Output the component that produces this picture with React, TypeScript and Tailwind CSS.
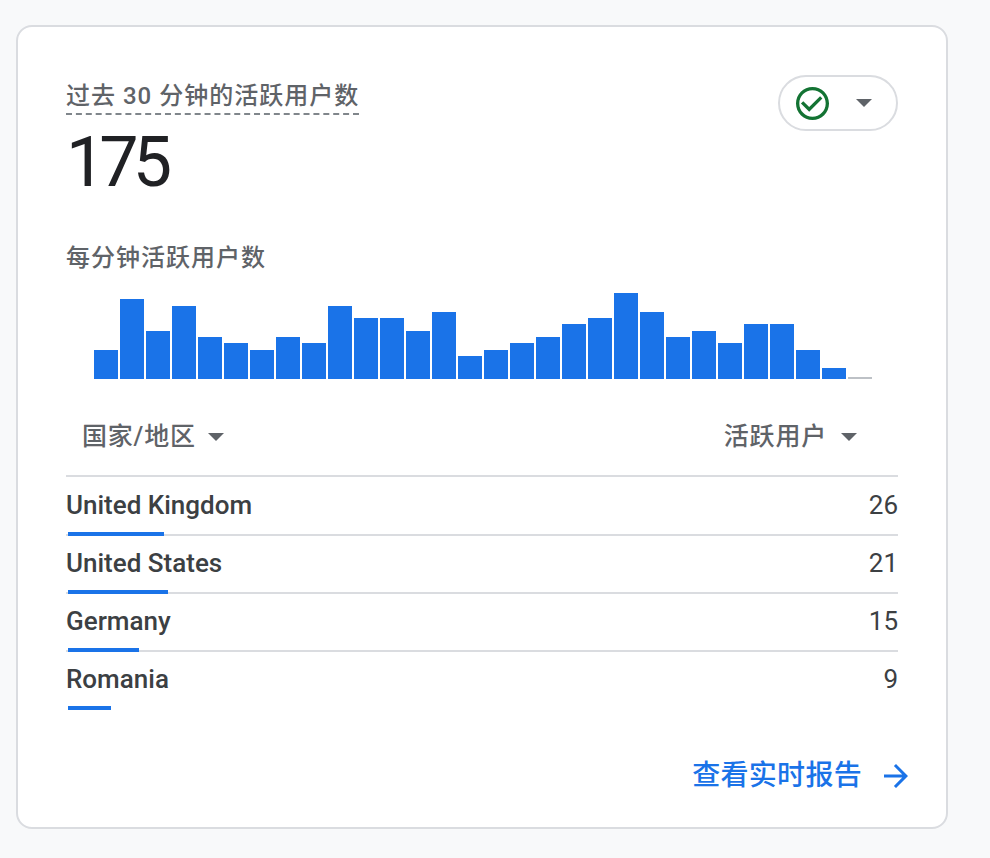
import React from 'react';

const FONT = "font-['Roboto','Noto_Sans_CJK_SC',sans-serif]";

const bars = [29, 80, 48, 73, 42, 36, 29, 42, 36, 73, 61, 61, 48, 67, 23, 29, 36, 42, 55, 61, 86, 67, 42, 48, 36, 55, 55, 29, 11];

const rows = [
    { name: 'United Kingdom', value: 26, width: 96 },
    { name: 'United States', value: 21, width: 100 },
    { name: 'Germany', value: 15, width: 71 },
    { name: 'Romania', value: 9, width: 43 },
];

const Caret = () => (
    <svg viewBox="0 0 16 8" className="w-4 h-2 shrink-0">
        <path d="M0 0h16l-8 8z" fill="#5f6368" />
    </svg>
);

const App: React.FC = () => {
    return (
        <div className={`${FONT} bg-[#f8f9fa] h-[858px] w-[990px] pt-[25px] pl-[16px] overflow-hidden`}>
            <div className="bg-white border-2 border-[#dadce0] rounded-2xl w-[932px] h-[804px] pl-[48px] pr-[48px] pt-[48px]">
                <div className="flex justify-between items-start">
                    <div>
                        <div className="inline-block font-medium text-[24px] leading-[28px] tracking-[1px] text-[#5f6368] border-b-2 border-dashed border-[#80868b] h-[40px] pt-[7px]">
                            过去 30 分钟的活跃用户数
                        </div>
                        <div className="text-[70px] leading-[80px] text-[#202124] tracking-[-6px] mt-[7px]">175</div>
                    </div>
                    <div className="flex items-center justify-between w-[120px] h-[56px] rounded-full border-2 border-[#dadce0] pl-[16px] pr-[24px]">
                        <svg viewBox="2 2 20 20" className="w-[33px] h-[33px]">
                            <path
                                fill="#137333"
                                d="M16.59 7.58L10 14.17l-3.59-3.58L5 12l5 5 8-8zM12 2C6.48 2 2 6.48 2 12s4.48 10 10 10 10-4.48 10-10S17.52 2 12 2zm0 18c-4.42 0-8-3.58-8-8s3.58-8 8-8 8 3.58 8 8-3.58 8-8 8z"
                            />
                        </svg>
                        <Caret />
                    </div>
                </div>

                <div className="mt-[42px] font-medium text-[24px] leading-[28px] tracking-[1px] text-[#5f6368]">每分钟活跃用户数</div>

                <div className="flex items-end gap-[2px] h-[86px] mt-[21px] pl-[28px]">
                    {bars.map((h, i) => (
                        <div key={i} className="w-[24px] bg-[#1a73e8]" style={{ height: h }} />
                    ))}
                    <div className="w-[24px] h-[2px] bg-[#bdc1c6]" />
                </div>

                <div className="flex justify-between items-center h-[98px] border-b-2 border-[#dadce0] pt-[20px] pl-[16px] pr-[41px] font-medium text-[25px] tracking-[0.8px] text-[#5f6368]">
                    <div className="flex items-center gap-[12px]">
                        <span>国家/地区</span>
                        <Caret />
                    </div>
                    <div className="flex items-center gap-[14px]">
                        <span>活跃用户</span>
                        <Caret />
                    </div>
                </div>

                <div className="pt-[1px]">
                    {rows.map((row, i) => (
                        <div key={row.name} className={`relative h-[58px] pb-[2px] flex justify-between items-center text-[26px] text-[#3c4043] border-b-2 ${i < rows.length - 1 ? 'border-[#dadce0]' : 'border-transparent'}`}>
                            <span className="font-medium">{row.name}</span>
                            <span>{row.value}</span>
                            <div className="absolute left-[2px] bottom-[-2px] h-[4px] bg-[#1a73e8]" style={{ width: row.width }} />
                        </div>
                    ))}
                </div>

                <div className="flex justify-end items-center gap-[14px] mt-[45px] mr-[-16px] text-[28px] text-[#1a73e8]">
                    <span className="font-medium tracking-[0.3px]">查看实时报告</span>
                    <svg viewBox="0 0 24 24" className="w-[36px] h-[36px] ml-[2px]">
                        <path fill="#1a73e8" d="M12 4l-1.41 1.41L16.17 11H4v2h12.17l-5.58 5.59L12 20l8-8z" />
                    </svg>
                </div>
            </div>
        </div>
    );
};

export default App;
